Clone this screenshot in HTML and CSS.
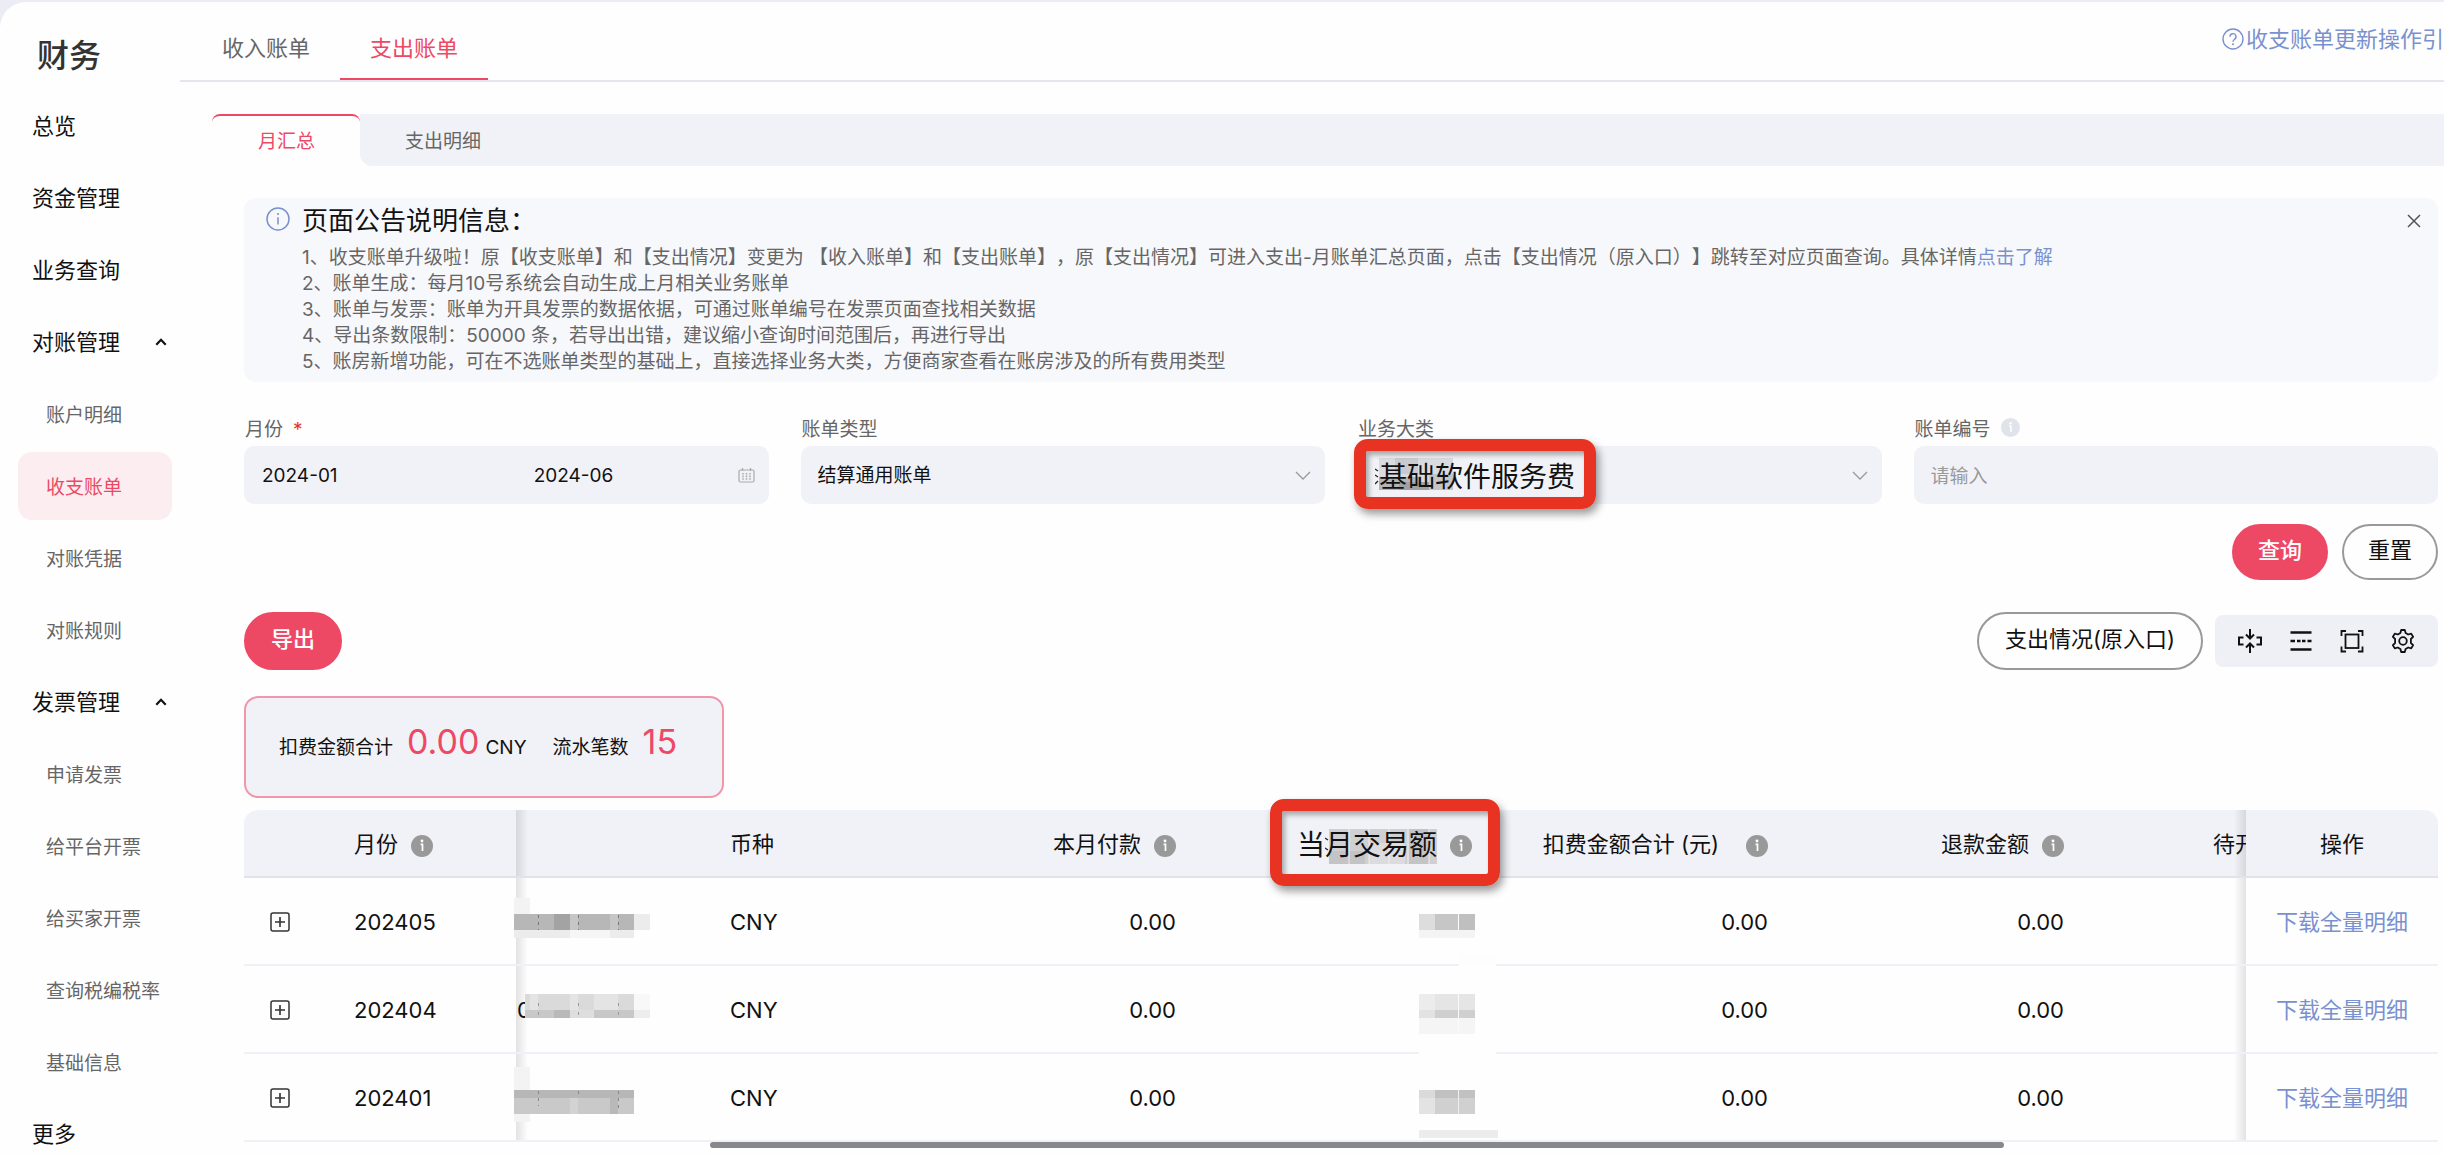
FILE: index.html
```html
<!DOCTYPE html>
<html lang="zh-CN">
<head>
<meta charset="utf-8">
<meta name="viewport" content="width=device-width, initial-scale=1">
<title>财务</title>
<link rel="stylesheet" href="styles.css">
</head>
<body>
<svg class="sprite" aria-hidden="true">
  <symbol id="info" viewBox="0 0 22 22"><circle cx="11" cy="11" r="11" fill="currentColor"/><circle cx="11" cy="6" r="1.4" fill="#fff"/><path d="M9.6 9.3h1.9v6.8" fill="none" stroke="#fff" stroke-width="1.7"/></symbol>
  <symbol id="down" viewBox="0 0 16 9"><path d="M1 1l7 7 7-7" fill="none" stroke="#999" stroke-width="1.3"/></symbol>
  <symbol id="up" viewBox="0 0 12 8"><path d="M1.3 6.8L6 1.8l4.7 5" fill="none" stroke="#111" stroke-width="2.2"/></symbol>
  <symbol id="plus" viewBox="0 0 20 20"><rect x="1" y="1" width="18" height="18" rx="2" fill="none" stroke="#333" stroke-width="1.5"/><path d="M10 5v10M5 10h10" stroke="#333" stroke-width="1.6"/></symbol>
</svg>
<div class="shell">
  <aside class="sidebar">
    <h1>财务</h1>
    <nav>
      <a class="item" href="#">总览</a>
      <a class="item" href="#">资金管理</a>
      <a class="item" href="#">业务查询</a>
      <a class="item" href="#">对账管理<svg class="up"><use href="#up"/></svg></a>
      <a class="item sub" href="#">账户明细</a>
      <a class="item sub active" href="#">收支账单</a>
      <a class="item sub" href="#">对账凭据</a>
      <a class="item sub" href="#">对账规则</a>
      <a class="item" href="#">发票管理<svg class="up"><use href="#up"/></svg></a>
      <a class="item sub" href="#">申请发票</a>
      <a class="item sub" href="#">给平台开票</a>
      <a class="item sub" href="#">给买家开票</a>
      <a class="item sub" href="#">查询税编税率</a>
      <a class="item sub" href="#">基础信息</a>
      <a class="item" href="#">更多</a>
    </nav>
  </aside>
  <main>
    <header class="top">
      <a class="tab" href="#">收入账单</a>
      <a class="tab current" href="#">支出账单</a>
      <a class="guide" href="#"><svg viewBox="0 0 22 22"><circle cx="11" cy="11" r="10" fill="none" stroke="currentColor" stroke-width="1.4"/><path d="M8 8.8a3 3 0 1 1 4.6 2.4c-1 .7-1.6 1.2-1.6 2.6" fill="none" stroke="currentColor" stroke-width="1.4"/><circle cx="11" cy="16.2" r="1" fill="currentColor"/></svg>收支账单更新操作引</a>
    </header>
    <div class="subtabs">
      <a class="subtab current" href="#">月汇总</a>
      <a class="subtab" href="#">支出明细</a>
    </div>
    <div class="content">
      <section class="notice">
        <svg class="notice-icon" viewBox="0 0 24 24"><circle cx="12" cy="12" r="11" fill="none" stroke="#7a91cf" stroke-width="1.5"/><circle cx="12" cy="7" r="1.1" fill="#7a91cf"/><path d="M12 10.3v7.2" stroke="#7a91cf" stroke-width="1.5"/></svg>
        <div class="notice-body">
          <h2>页面公告说明信息：</h2>
          <p>1、收支账单升级啦！原【收支账单】和【支出情况】变更为 【收入账单】和【支出账单】，原【支出情况】可进入支出-月账单汇总页面，点击【支出情况（原入口）】跳转至对应页面查询。具体详情<a href="#">点击了解</a></p>
          <p>2、账单生成：每月10号系统会自动生成上月相关业务账单</p>
          <p>3、账单与发票：账单为开具发票的数据依据，可通过账单编号在发票页面查找相关数据</p>
          <p>4、导出条数限制：50000 条，若导出出错，建议缩小查询时间范围后，再进行导出</p>
          <p>5、账房新增功能，可在不选账单类型的基础上，直接选择业务大类，方便商家查看在账房涉及的所有费用类型</p>
        </div>
        <button class="close" type="button" aria-label="关闭"><svg viewBox="0 0 14 14"><path d="M1 1l12 12M13 1L1 13" stroke="#555" stroke-width="1.5"/></svg></button>
      </section>
      <form class="filters">
        <div class="field">
          <label for="from">月份 <i>*</i></label>
          <div class="control range">
            <input class="from" id="from" type="text" value="2024-01">
            <input class="to" type="text" value="2024-06" aria-label="结束月份">
            <svg class="calendar" viewBox="0 0 17 15"><rect x="1" y="2" width="15" height="12" rx="1.5" fill="none" stroke="#aaa" stroke-width="1.2"/><path d="M4.5 0v3M12.5 0v3" stroke="#aaa" stroke-width="1.3"/><path d="M5 5v7M8.500 5v7M12 5v7" stroke="#aaa" stroke-width="1.5" stroke-dasharray="1.6 1"/></svg>
          </div>
        </div>
        <div class="field">
          <label for="type">账单类型</label>
          <div class="control">
            <select id="type"><option>结算通用账单</option></select>
            <svg class="down"><use href="#down"/></svg>
          </div>
        </div>
        <div class="field">
          <label for="category">业务大类</label>
          <div class="control">
            <svg class="smudge" viewBox="0 0 78 32"><path fill="#d9dbe0" d="M4 0h74v32H4z"/><path fill="#c8cacf" d="M20 0h23v16H20z"/><path fill="#b4b5b9" d="M4 19h40v13H4z"/><path fill="#a0a1a4" d="M24 24h30v8H24z"/><path fill="#c4c5c9" d="M54 16h24v16H54z"/><path d="M0 11l3 2M0 17l3 2M0 26l3-3" stroke="#222" stroke-width="1.3"/></svg>
            <select class="large" id="category"><option>基础软件服务费</option></select>
            <svg class="down"><use href="#down"/></svg>
            <span class="mark mark-field"></span>
          </div>
        </div>
        <div class="field">
          <label for="number">账单编号<svg class="hint"><use href="#info"/></svg></label>
          <div class="control"><input id="number" type="text" placeholder="请输入"></div>
        </div>
        <div class="actions">
          <button class="btn primary" type="button">查询</button>
          <button class="btn" type="button">重置</button>
        </div>
      </form>
      <div class="toolbar">
        <button class="btn primary" type="button">导出</button>
        <button class="btn legacy" type="button">支出情况(原入口)</button>
        <div class="tools">
          <button type="button" aria-label="列宽"><svg viewBox="0 0 24 24"><path d="M5.500 8.500H1v7h4.500M18.500 8.500H23v7h-4.500" fill="none" stroke="#111" stroke-width="2"/><path d="M12 0v8M12 24v-8" stroke="#111" stroke-width="2"/><path d="M8 5.500l4 4 4-4M8 18.500l4-4 4 4" fill="none" stroke="#111" stroke-width="2"/></svg></button>
          <button type="button" aria-label="密度"><svg viewBox="0 0 24 24"><path d="M1.500 3.500h21M1.500 20.500h21M1.500 12H6M8 12h3.500M13 12h3.500M18.500 12h4" stroke="#111" stroke-width="2.600"/></svg></button>
          <button type="button" aria-label="全屏"><svg viewBox="0 0 24 24"><path d="M1.500 7V2H6M18 2h4.500v5M22.500 17.500v5H18M6 22.500H1.500v-5" fill="none" stroke="#111" stroke-width="1.800"/><rect x="5.500" y="5.500" width="13" height="13.500" fill="none" stroke="#111" stroke-width="1.800"/></svg></button>
          <button type="button" aria-label="设置"><svg viewBox="0 0 24 24"><g fill="none" stroke="#111" stroke-width="1.800" stroke-linejoin="round"><path d="M10.200 1h3.600l.8 3 2.600 1.500 3-.9 1.900 3.200-2.200 2.200v4l2.200 2.200-1.900 3.200-3-.9-2.600 1.500-.8 3h-3.600l-.8-3-2.600-1.500-3 .9-1.900-3.200L4.100 14v-4L1.900 7.800l1.900-3.200 3 .9L9.400 4z"/><circle cx="12" cy="12" r="3.800"/></g></svg></button>
        </div>
      </div>
      <section class="summary">
        <span>扣费金额合计</span><strong>0.00</strong><span class="unit">CNY</span><span class="count">流水笔数</span><strong>15</strong>
      </section>
      <div class="table-wrap">
        <table>
          <colgroup><col class="c-expand"><col class="c-month"><col class="c-id"><col class="c-currency"><col class="c-sum"><col class="c-sum"><col class="c-sum"><col class="c-sum"><col class="c-wait"><col class="c-op"></colgroup>
          <thead>
            <tr>
              <th></th>
              <th class="month">月份<svg class="info"><use href="#info"/></svg></th>
              <th class="id"></th>
              <th class="currency">币种</th>
              <th class="num">本月付款<svg class="info"><use href="#info"/></svg></th>
              <th class="num marked"><svg class="smear" viewBox="0 0 112 35"><path fill="#d0d0d2" d="M4 0h108v35H4z"/><path fill="#c4c4c6" d="M4 22h36v13H4zM84 0h20v35H84z"/><path fill="#dcdcde" d="M44 14h36v21H44z"/><path d="M24 0v35M44 0v35M64 0v35M83 0v35M104 0v35" stroke="#eee"/><path d="M0 9l3 2M0 19l3 2" stroke="#222" stroke-width="1.3"/></svg><span class="large">当月交易额</span><svg class="info"><use href="#info"/></svg><span class="mark mark-head"></span></th>
              <th class="num total">扣费金额合计 (元)<svg class="info"><use href="#info"/></svg></th>
              <th class="num">退款金额<svg class="info"><use href="#info"/></svg></th>
              <th class="wait">待开</th>
              <th class="op">操作</th>
            </tr>
          </thead>
          <tbody>
            <tr>
              <td class="expand"><button type="button" aria-label="展开"><svg><use href="#plus"/></svg></button></td>
              <td class="month">202405</td>
              <td class="id"><svg class="mosaic" viewBox="0 0 138 88"><path fill="#f3f3f3" d="M0 20h16v16H0z"/><path fill="#b7b7b7" d="M0 36h120v16H0z"/><path fill="#a3a3a3" d="M40 36h16v16H40z"/><path fill="#c6c6c6" d="M56 36h8v16h-8zM96 36h8v16h-8z"/><path fill="#ececec" d="M120 36h16v16h-16zM0 52h56v8H0zM96 52h24v8H96z"/><path fill="#f6f6f6" d="M56 52h40v8H56z"/><path d="M24.500 37v15M64.500 37v15M104.500 37v15" stroke="#777" stroke-dasharray="3 4"/></svg></td>
              <td class="currency">CNY</td>
              <td class="num">0.00</td>
              <td class="num masked"><svg class="mosaic" viewBox="0 0 80 88"><path fill="#ddd" d="M0 36h16v16H0z"/><path fill="#c6c6c6" d="M16 36h23v16H16z"/><path fill="#bfbfbf" d="M40 36h16v16H40z"/><path fill="#f4f4f4" d="M0 52h56v8H0z"/><path fill="#fdfdfd" d="M40 76h39v12H40z"/></svg></td>
              <td class="num">0.00</td>
              <td class="num">0.00</td>
              <td></td>
              <td class="op"><a href="#">下载全量明细</a></td>
            </tr>
            <tr>
              <td class="expand"><button type="button" aria-label="展开"><svg><use href="#plus"/></svg></button></td>
              <td class="month">202404</td>
              <td class="id">0<svg class="mosaic" viewBox="0 0 138 88"><path fill="#dadada" d="M11 28h109v16H11z"/><path fill="#e4e4e4" d="M16 28h8v16h-8zM56 28h8v16h-8zM80 28h24v16H80z"/><path fill="#f8f8f8" d="M120 28h16v16h-16z"/><path fill="#c8c8c8" d="M11 44h109v8H11z"/><path fill="#b9b9b9" d="M40 44h16v8H40z"/><path fill="#dedede" d="M56 44h24v8H56z"/><path fill="#ededed" d="M120 44h16v8h-16z"/><path d="M24.500 37v15M64.500 37v15M104.500 37v15" stroke="#999" stroke-dasharray="3 6"/></svg></td>
              <td class="currency">CNY</td>
              <td class="num">0.00</td>
              <td class="num masked"><svg class="mosaic" viewBox="0 0 80 88"><path fill="#ececec" d="M0 28h16v16H0z"/><path fill="#e5e5e5" d="M16 28h40v16H16z"/><path fill="#e2e2e2" d="M0 44h16v8H0z"/><path fill="#cfcfcf" d="M16 44h40v8H16z"/><path fill="#f5f5f5" d="M0 52h56v16H0z"/><path d="M39.500 28v40" stroke="#fafafa"/><path fill="#fdfdfd" d="M0 86h79v2H0z"/></svg></td>
              <td class="num">0.00</td>
              <td class="num">0.00</td>
              <td></td>
              <td class="op"><a href="#">下载全量明细</a></td>
            </tr>
            <tr>
              <td class="expand"><button type="button" aria-label="展开"><svg><use href="#plus"/></svg></button></td>
              <td class="month">202401</td>
              <td class="id"><svg class="mosaic" viewBox="0 0 138 88"><path fill="#f3f3f3" d="M0 13h16v55H0z"/><path fill="#b7b7b7" d="M0 36h120v8H0z"/><path fill="#c9c9c9" d="M0 44h120v16H0z"/><path fill="#d3d3d3" d="M56 44h8v16h-8z"/><path fill="#b9b9b9" d="M96 44h8v16h-8z"/><path d="M24.500 37v15M64.500 37v6M104.500 37v20" stroke="#888" stroke-dasharray="3 4"/></svg></td>
              <td class="currency">CNY</td>
              <td class="num">0.00</td>
              <td class="num masked"><svg class="mosaic" viewBox="0 0 80 88"><path fill="#dadada" d="M0 36h16v8H0z"/><path fill="#c1c1c1" d="M16 36h40v8H16z"/><path fill="#e3e3e3" d="M0 44h16v16H0z"/><path fill="#d0d0d0" d="M16 44h40v16H16z"/><path fill="#ececec" d="M0 76h79v8H0z"/><path d="M39.500 36v24" stroke="#eee"/></svg></td>
              <td class="num">0.00</td>
              <td class="num">0.00</td>
              <td></td>
              <td class="op"><a href="#">下载全量明细</a></td>
            </tr>
          </tbody>
        </table>
        <div class="scroll"><span class="thumb"></span></div>
      </div>
    </div>
  </main>
</div>
</body>
</html>
```
FILE: styles.css
```css
* { box-sizing: border-box; }
html, body { margin: 0; height: 100%; }
body {
  background: #ecedf4;
  color: #111;
  font: 22px/32px Inter, "Noto Sans CJK SC", sans-serif;
  text-spacing-trim: space-all;
  overflow: hidden;
  padding-top: 2px;
}
a { color: #7a91cf; text-decoration: none; }
svg { flex: none; }
button, input, select { font: inherit; color: inherit; margin: 0; padding: 0; border: 0; background: none; }
h1, h2, p { margin: 0; font-weight: 400; }
.sprite { display: none; }

.shell { display: flex; height: 100%; background: #fefefe; border-top-left-radius: 26px; overflow: hidden; }

/* sidebar */
.sidebar { flex: none; width: 180px; padding: 30px 8px 0 18px; overflow: hidden; }
.sidebar h1 { font-size: 32px; line-height: 48px; font-weight: 500; color: #333; padding-left: 19px; }
.sidebar nav { display: flex; flex-direction: column; gap: 4px; padding-top: 12px; }
.item { display: flex; align-items: center; justify-content: space-between; height: 68px; padding: 0 5px 0 14px; color: #111; border-radius: 14px; }
.item.sub { padding-left: 28px; padding-top: 3px; font-size: 19px; color: #666; white-space: nowrap; }
.item.active { background: #fcedf0; color: #ed4965; }
.up { width: 12px; height: 8px; }

/* main */
main { flex: 1; min-width: 0; }
.top { display: flex; height: 80px; padding-left: 12px; border-bottom: 2px solid #e4e6ed; }
.tab { padding: 30px 30px 0; color: #666; height: 78px; }
.tab.current { color: #ed4965; border-bottom: 2px solid #ed4965; }
.guide { display: flex; align-items: center; gap: 2px; margin-left: auto; height: 74px; }
.guide svg { width: 22px; height: 22px; }
.subtabs { display: flex; margin: 32px 0 0 32px; font-size: 19px; background: linear-gradient(90deg, #fefefe 160px, #f1f2f7 160px); }
.subtab { height: 52px; padding: 12px 45px; color: #666; background: #f1f2f7; border-bottom-left-radius: 12px; }
.subtab.current { width: 148px; padding: 10px 0 0 46px; color: #ed4965; background: #fefefe; border-top: 2px solid #ed4965; border-radius: 8px 8px 0 0; }
.content { padding: 32px 6px 0 64px; }

.notice { display: flex; padding: 7px 17px 7px 22px; background: #f7f8fb; border-radius: 12px; }
.notice-icon { width: 24px; height: 24px; margin: 2px 12px 0 0; }
.notice-body { flex: 1; min-width: 0; }
.notice h2 { font-size: 26px; padding-bottom: 8px; line-height: 32px; }
.notice p { font-size: 19px; line-height: 26px; color: #666; white-space: nowrap; }
.close { height: 14px; margin-top: 9px; }
.close svg { display: block; width: 14px; height: 14px; }

/* filter form */
.filters { display: grid; grid-template-columns: repeat(4, 1fr); column-gap: 32px; row-gap: 20px; padding-top: 34px; font-size: 19px; }
.field label { display: flex; align-items: center; height: 28px; margin-bottom: 2px; padding-left: 1px; color: #666; gap: 10px; }
.field label i { font-style: normal; color: #e83323; }
.hint { width: 19px; height: 19px; color: #e1e3ea; margin-bottom: 6px; }
.control { position: relative; display: flex; align-items: center; height: 58px; border-radius: 10px; background: #f1f2f7; }
.control input, .control select { width: 100%; height: 100%; padding: 2px 17px 0; appearance: none; outline: none; }
.control input::placeholder { color: #999; opacity: 1; }
.control.range { padding: 0 14px 0 18px; }
.control.range input { min-width: 0; padding: 0; }
.range .from { flex: 4; }
.range .to { flex: 3; }
.calendar { width: 17px; height: 15px; }
.control select { position: relative; }
.control select.large { padding: 4px 0 0 22px; font-size: 28px; }
.down { position: absolute; right: 14px; top: 25px; width: 16px; height: 9px; }
.smudge { position: absolute; left: 18px; top: 12px; width: 78px; height: 32px; }
.mark { position: absolute; border: 12px solid #e83323; border-radius: 14px; box-shadow: 3px 5px 8px rgba(0, 0, 0, .4), inset 3px 4px 5px rgba(0, 0, 0, .3); pointer-events: none; }
.mark-field { left: -3px; top: -7px; width: 242px; height: 70px; }
.actions { grid-column: 1 / -1; display: flex; justify-content: flex-end; gap: 14px; }
.btn { height: 58px; padding: 0 24px 4px; border: 2px solid #999; border-radius: 29px; font-size: 22px; line-height: 32px; }
.btn.primary { background: #ed4965; border-color: #ed4965; color: #fff; font-weight: 500; padding-left: 25px; padding-right: 25px; }
.actions .btn { height: 56px; width: 96px; padding-left: 0; padding-right: 0; }

.toolbar { display: flex; align-items: center; padding-top: 32px; }
.btn.legacy { margin-left: auto; padding-left: 26px; padding-right: 26px; }
.tools { display: flex; gap: 27px; margin-left: 12px; padding: 0 23px; height: 52px; border-radius: 8px; background: #eff0f5; }
.tools svg { display: block; width: 24px; height: 24px; }

.summary { display: flex; align-items: baseline; width: 480px; max-width: 100%; height: 102px; margin-top: 26px; padding: 28px 0 0 33px; border: 2px solid #f097aa; border-radius: 14px; background: #f1f2f7; font-size: 19px; white-space: nowrap; }
.summary strong { margin-left: 14px; font-size: 34px; font-weight: 400; color: #ed4965; }
.unit { margin-left: 6px; }
.count { margin-left: 26px; }

/* table */
.table-wrap { margin-top: 12px; }
table { width: 100%; table-layout: fixed; border-spacing: 0; }
.c-expand { width: 68px; }
.c-month { width: 204px; }
.c-id { width: 190px; }
.c-currency { width: 198px; }
.c-sum { width: 296px; }
.c-wait { width: 158px; }
.c-op { width: 192px; }
th, td { position: relative; padding: 2px 24px 0; text-align: left; white-space: nowrap; font-weight: 400; }
th { height: 68px; background: #f1f2f7; border-bottom: 2px solid #e2e3ea; }
th:first-child { border-top-left-radius: 14px; }
th:last-child { border-top-right-radius: 14px; }
td { height: 88px; border-bottom: 2px solid #f0f1f6; }
td.expand { padding: 2px 0 0 26px; }
.expand button { display: block; }
.expand svg { display: block; width: 20px; height: 20px; }
th.month, td.month { padding-left: 42px; }
td.id { padding-left: 1px; }
th.num, td.num { text-align: right; }
.info { width: 22px; height: 22px; margin-left: 13px; vertical-align: -5px; color: #999; }
.total .info { margin-left: 27px; }
th.wait { overflow: hidden; padding-left: 125px; padding-right: 0; text-overflow: clip; }
th.op, td.op { padding-left: 0; padding-right: 0; text-align: center; background: #fefefe; }
th.op { background: #f1f2f7; }
.id::before, .op::before { content: ""; position: absolute; top: 0; bottom: 0; width: 12px; }
.id::before { left: 0; background: linear-gradient(90deg, rgba(0, 0, 0, .11), transparent); }
.op::before { right: 100%; background: linear-gradient(270deg, rgba(0, 0, 0, .11), transparent); }
.mosaic { position: absolute; top: 0; left: -2px; width: 138px; height: 88px; }
.masked .mosaic { left: auto; right: -3px; width: 80px; }
th.marked { z-index: 1; }
th .large { position: relative; font-size: 28px; line-height: 32px; vertical-align: -3px; }
.smear { position: absolute; right: 59px; top: 19px; width: 112px; height: 35px; }
.mark-head { right: -4px; top: -11px; width: 230px; height: 87px; }

.scroll { height: 6px; padding: 0 434px 0 466px; }
.thumb { display: block; height: 6px; border-radius: 3px; background: #87888c; }
```
